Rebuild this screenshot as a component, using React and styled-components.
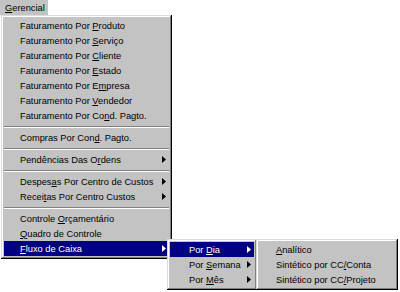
import React from 'react';
import styled, { createGlobalStyle } from 'styled-components';

const GlobalStyle = createGlobalStyle`
  body {
    margin: 0;
    background: #ffffff;
    font-family: 'Liberation Sans', Arial, sans-serif;
  }
`;

const Screen = styled.div`
  position: relative;
  width: 400px;
  height: 292px;
  overflow: hidden;
  background: #ffffff;
`;

const MenuBar = styled.div`
  display: flex;
  height: 15px;
`;

const MenuTitle = styled.div`
  display: flex;
  align-items: center;
  width: 43px;
  height: 15px;
  padding-left: 5px;
  background: #c3c3c3;
  font-size: 9.3px;
  color: #000;
`;

const Popup = styled.div`
  position: absolute;
  top: ${(p) => p.$top}px;
  left: ${(p) => p.$left}px;
  width: ${(p) => p.$width}px;
  box-sizing: border-box;
  padding: 3px;
  background: #c3c3c3;
  box-shadow: inset -1px -1px #000000, inset 1px 1px #dcdcdc,
    inset -2px -2px #808080, inset 2px 2px #ffffff;
  font-size: 9.3px;
`;

const Item = styled.div`
  display: flex;
  align-items: center;
  height: 15px;
  padding-left: ${(p) => p.$indent}px;
  padding-right: ${(p) => p.$arrowPad || 0}px;
  background: ${(p) => (p.$active ? '#000080' : 'transparent')};
  color: ${(p) => (p.$active ? '#ffffff' : '#000000')};
  white-space: nowrap;
`;

const Label = styled.span`
  flex: 1;
`;

const Key = styled.span`
  text-decoration: underline;
`;

const Separator = styled.div`
  height: 7px;
  display: flex;
  flex-direction: column;
  justify-content: center;
  &::before {
    content: '';
    display: block;
    height: 1px;
    background: #808080;
  }
  &::after {
    content: '';
    display: block;
    height: 1px;
    background: #ffffff;
  }
`;

const Arrow = ({ color }) => (
  <svg width="4" height="7" viewBox="0 0 4 7">
    <polygon points="0,0 4,3.5 0,7" fill={color} />
  </svg>
);

// text with one underlined access key
const Mn = ({ text, k }) => (
  <>
    {text.slice(0, k)}
    <Key>{text[k]}</Key>
    {text.slice(k + 1)}
  </>
);

const MenuItem = ({ text, k, sub, active, indent = 16, arrowPad = 3 }) => (
  <Item $active={active} $indent={indent} $arrowPad={arrowPad}>
    <Label>
      <Mn text={text} k={k} />
    </Label>
    {sub && <Arrow color={active ? '#ffffff' : '#000000'} />}
  </Item>
);

const main = [
  ['Faturamento Por Produto', 16],
  ['Faturamento Por Serviço', 16],
  ['Faturamento Por Cliente', 16],
  ['Faturamento Por Estado', 16],
  ['Faturamento Por Empresa', 17],
  ['Faturamento Por Vendedor', 16],
  ['Faturamento Por Cond. Pagto.', 18],
  '-',
  ['Compras Por Cond. Pagto.', 15],
  '-',
  ['Pendências Das Ordens', 16, true],
  '-',
  ['Despesas Por Centro de Custos', 6, true],
  ['Receitas Por Centro Custos', 5, true],
  '-',
  ['Controle Orçamentário', 9],
  ['Quadro de Controle', 0],
  ['Fluxo de Caixa', 0, true, true],
];

const App = () => (
  <Screen>
    <GlobalStyle />
    <MenuBar>
      <MenuTitle>
        <Mn text="Gerencial" k={0} />
      </MenuTitle>
    </MenuBar>

    <Popup $top={15} $left={1} $width={171}>
      {main.map((m, i) =>
        m === '-' ? (
          <Separator key={i} />
        ) : (
          <MenuItem key={i} text={m[0]} k={m[1]} sub={m[2]} active={m[3]} />
        )
      )}
    </Popup>

    <Popup $top={239} $left={167} $width={90}>
      <MenuItem text="Por Dia" k={4} sub active indent={19} />
      <MenuItem text="Por Semana" k={4} sub indent={19} />
      <MenuItem text="Por Mês" k={4} sub indent={19} />
    </Popup>

    <Popup $top={239} $left={256} $width={142}>
      <MenuItem text="Analítico" k={0} indent={17} />
      <MenuItem text="Sintético por CC/Conta" k={16} indent={17} />
      <MenuItem text="Sintético por CC/Projeto" k={16} indent={17} />
    </Popup>
  </Screen>
);

export default App;
